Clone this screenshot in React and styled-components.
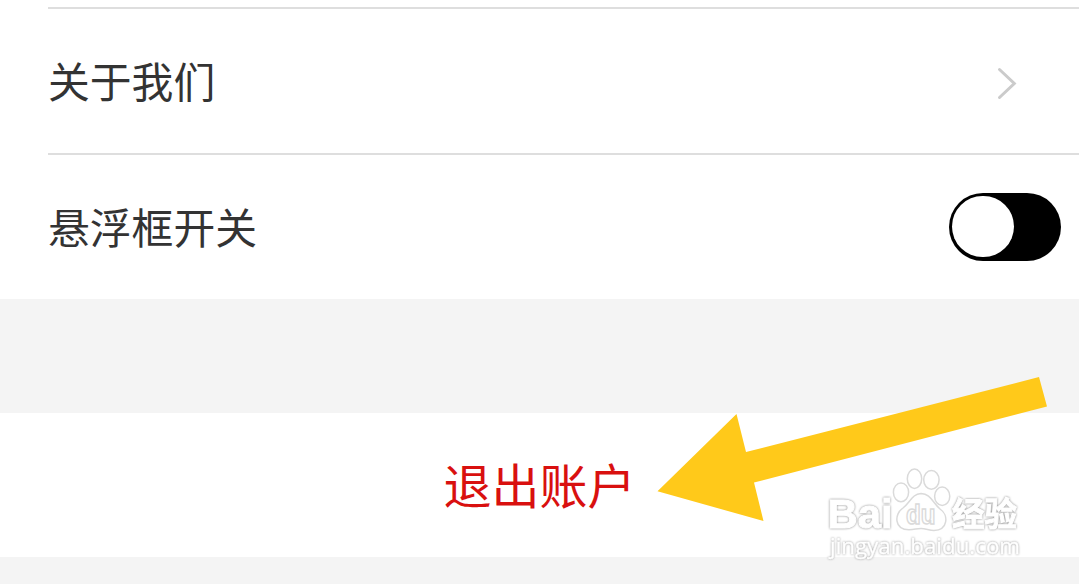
import React, { useState } from "react";
import styled, { createGlobalStyle } from "styled-components";

const App = () => {
  const [floating, setFloating] = useState(false);

  return (
    <Container>
      <GlobalStyle />
      <List>
        <Row>
          <Label>关于我们</Label>
          <Chevron viewBox="0 0 24 36">
            <path d="M4.5 4.5 L19.3 18.5 L4.5 32.5" />
          </Chevron>
        </Row>
        <Row>
          <Label>悬浮框开关</Label>
          <Toggle type="button" $on={floating} onClick={() => setFloating(!floating)}>
            <Knob />
          </Toggle>
        </Row>
      </List>
      <LogoutButton type="button">退出账户</LogoutButton>

      <Arrow viewBox="0 0 400 154">
        <polygon points="7.5,121.3 86.5,44 96,82 389,7 397,36.5 104,112.5 113.5,151" />
      </Arrow>

      <Watermark viewBox="0 0 215 110">
        <g className="paw">
          <ellipse cx="86" cy="32.3" rx="7.6" ry="9.4" />
          <ellipse cx="99.5" cy="18.7" rx="7.2" ry="9.7" />
          <ellipse cx="116.4" cy="19.8" rx="7.7" ry="9.4" />
          <ellipse cx="127.2" cy="36.2" rx="7.6" ry="9.2" />
          <path d="M106 33.5 C97 34 95.5 42 88 48 C79 54 79 69.7 94 69.7 C100 69.7 101 68.5 106 68.5 C111 68.5 114 70.4 119 70.4 C133 70 134 55 125 49 C117 42 116 34 106 33.5 Z" />
          <text x="91" y="64" fontSize="27" textLength="29.5" lengthAdjust="spacingAndGlyphs">
            du
          </text>
        </g>
        <text className="brand" x="12.5" y="67.5" fontSize="41" textLength="65" lengthAdjust="spacingAndGlyphs">
          Bai
        </text>
        <text className="brand cjk" x="137" y="65.5" fontSize="33" textLength="65" lengthAdjust="spacingAndGlyphs">
          经验
        </text>
        <text className="url" x="15" y="94" fontSize="22" textLength="190" lengthAdjust="spacingAndGlyphs">
          jingyan.baidu.com
        </text>
      </Watermark>
    </Container>
  );
};

const GlobalStyle = createGlobalStyle`
  * {
    box-sizing: border-box;
  }
  body {
    margin: 0;
    background: #f4f4f4;
    font-family: "Noto Sans CJK SC", sans-serif;
  }
`;

const Container = styled.div`
  position: relative;
  height: 584px;
  overflow: hidden;
`;

const List = styled.div`
  height: 299px;
  padding: 7px 0 0 48px;
  background: #fff;
`;

const Row = styled.div`
  display: flex;
  align-items: center;
  justify-content: space-between;
  height: 146px;
  padding-right: 18px;
  border-top: 2px solid #dedede;
`;

const Label = styled.span`
  margin-bottom: 3px;
  color: #333;
  font-size: 41.8px;
  font-weight: 400;
  line-height: 60px;
`;

const Chevron = styled.svg`
  width: 24px;
  height: 36px;
  margin: 3px 42px 0 0;

  path {
    fill: none;
    stroke: #cbcbcb;
    stroke-width: 3;
    stroke-linecap: round;
  }
`;

const Toggle = styled.button`
  display: flex;
  align-items: center;
  justify-content: ${({ $on }) => ($on ? "flex-end" : "flex-start")};
  width: 112.5px;
  height: 68px;
  margin-bottom: 1px;
  padding: 0 3.5px;
  border: none;
  border-radius: 34px;
  background: #000;
  cursor: pointer;
`;

const Knob = styled.span`
  width: 61.5px;
  height: 61.5px;
  border-radius: 50%;
  background: #fff;
`;

const LogoutButton = styled.button`
  display: block;
  width: 100%;
  height: 144px;
  margin-top: 114px;
  padding: 0 0 4px;
  border: none;
  background: #fff;
  color: #d9100f;
  font-family: inherit;
  font-size: 48px;
  font-weight: 400;
  cursor: pointer;
`;

const Arrow = styled.svg`
  position: absolute;
  left: 650px;
  top: 370px;
  width: 400px;
  height: 154px;

  polygon {
    fill: #ffc91a;
  }
`;

const Watermark = styled.svg`
  position: absolute;
  left: 815px;
  top: 460px;
  width: 215px;
  height: 110px;
  font-family: "Liberation Sans", sans-serif;

  .paw {
    fill: #fff;
    stroke: #dadada;
    stroke-width: 1.5;
    font-weight: 700;
  }
  .brand {
    fill: #fff;
    stroke: #fff;
    stroke-width: 1;
    font-weight: 700;
    filter: drop-shadow(0 0 0.8px #888);
  }
  .cjk {
    font-family: "Noto Sans CJK SC", sans-serif;
  }
  .url {
    font-family: "Open Sans", sans-serif;
    fill: #fff;
    stroke: #fff;
    stroke-width: 0.4;
    filter: drop-shadow(0 0 0.9px #999);
  }
`;

export default App;
